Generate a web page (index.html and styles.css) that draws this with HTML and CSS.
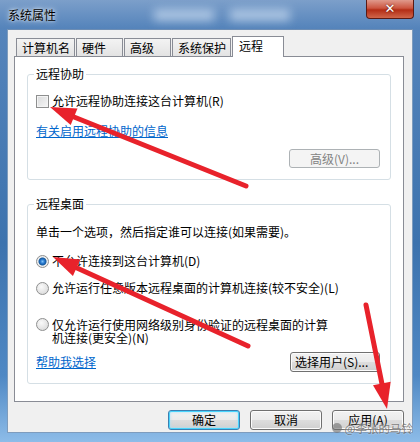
FILE: index.html
```html
<!DOCTYPE html>
<html lang="zh-CN">
<head>
    <meta charset="UTF-8">
    <title>系统属性</title>
    <link rel="stylesheet" href="styles.css">
</head>
<body>
<div class="window">
    <div class="titlebar">
        <span class="title">系统属性</span>
        <span class="blur b1"></span>
        <span class="blur b2"></span>
        <div class="close">✕</div>
    </div>

    <div class="client">
        <div class="tabs">
            <div class="tab">计算机名</div>
            <div class="tab">硬件</div>
            <div class="tab">高级</div>
            <div class="tab">系统保护</div>
            <div class="tab active">远程</div>
        </div>

        <div class="panel">
            <fieldset class="group assist">
                <legend>远程协助</legend>
                <label class="option first"><span class="check"></span>允许远程协助连接这台计算机(R)</label>
                <a class="link info" href="#">有关启用远程协助的信息</a>
                <div class="row right">
                    <button class="btn disabled">高级(V)...</button>
                </div>
            </fieldset>

            <fieldset class="group desktop">
                <legend>远程桌面</legend>
                <div class="intro">单击一个选项，然后指定谁可以连接(如果需要)。</div>
                <label class="option r1"><span class="radio on"></span>不允许连接到这台计算机(D)</label>
                <label class="option r2"><span class="radio"></span>允许运行任意版本远程桌面的计算机连接(较不安全)(L)</label>
                <label class="option r3"><span class="radio"></span><span class="wrap">仅允许运行使用网络级别身份验证的远程桌面的计算<br>机连接(更安全)(N)</span></label>
                <div class="row split">
                    <a class="link" href="#">帮助我选择</a>
                    <button class="btn">选择用户(S)...</button>
                </div>
            </fieldset>
        </div>

        <div class="footer">
            <button class="btn wide default">确定</button>
            <button class="btn wide">取消</button>
            <button class="btn wide">应用(A)</button>
        </div>
    </div>

    <svg class="arrows" width="420" height="442" viewBox="0 0 420 442">
        <g stroke="#e8222b" stroke-width="5" stroke-linecap="round" fill="none">
            <line x1="246" y1="186" x2="74" y2="117"/>
            <line x1="248" y1="346" x2="77" y2="268"/>
            <line x1="366" y1="305" x2="382" y2="384"/>
        </g>
        <g fill="#e8222b">
            <polygon points="50,107 77.5,108.4 70.7,125.1"/>
            <polygon points="53,257 80.4,259.6 72.9,276"/>
            <polygon points="387,409 373,385.3 390.7,381.7"/>
        </g>
    </svg>

    <div class="watermark"><span class="dot"></span>@李张的马铃</div>
</div>
</body>
</html>
```

FILE: styles.css
```css
* {
    box-sizing: border-box;
}
body {
    margin: 0;
    font-family: "Noto Sans CJK SC", "Liberation Sans", sans-serif;
    font-size: 12px;
    color: #000;
}
.window {
    position: relative;
    width: 420px;
    height: 442px;
    overflow: hidden;
    background: linear-gradient(to bottom, #7c9fca 0, #5584bb 28px, #3d73ae 55%, #4f88c4 85%, #8dbce8 100%);
    display: flex;
    flex-direction: column;
}

/* title bar */
.titlebar {
    height: 29px;
    display: flex;
    align-items: center;
    padding: 0 6px 0 8px;
}
.title {
    line-height: 16px;
    color: #000;
    text-shadow: 0 0 6px rgba(255, 255, 255, 0.9), 0 0 3px rgba(255, 255, 255, 0.8);
}
.blur {
    height: 12px;
    width: 60px;
    background: rgba(200, 218, 240, 0.7);
    filter: blur(5px);
}
.b1 {
    margin-left: 98px;
}
.b2 {
    margin-left: 16px;
}
.close {
    margin-left: auto;
    align-self: flex-start;
    width: 48px;
    height: 19px;
    border: 1px solid #5a1a14;
    border-top: none;
    border-radius: 0 0 4px 4px;
    background: linear-gradient(to bottom, #e09a8c 0, #cc5540 45%, #b32d16 55%, #d0664a 100%);
    color: #fff;
    font-family: "DejaVu Sans", sans-serif;
    font-weight: bold;
    font-size: 13px;
    line-height: 18px;
    text-align: center;
    text-shadow: 0 0 2px #4a0e06;
}

/* client area */
.client {
    margin: 0 7px;
    height: 404px;
    border: 1px solid #7e9cbd;
    border-top-color: #6d8db3;
    background: #f0f0f0;
    padding: 6px 8px 0 6px;
}
.tabs {
    display: flex;
    align-items: flex-end;
    gap: 1px;
    height: 20px;
    margin-left: 2px;
}
.tab {
    height: 18px;
    min-width: 47px;
    padding: 1px 4px 0 5px;
    line-height: 16px;
    border: 1px solid #898c95;
    border-bottom: none;
    background: linear-gradient(to bottom, #f3f3f3, #e3e3e3);
}
.tab.active {
    position: relative;
    z-index: 1;
    height: 21px;
    min-width: 52px;
    margin-bottom: -1px;
    padding: 1px 4px 0 6px;
    background: #fff;
}
.panel {
    border: 1px solid #898c95;
    background: #fff;
    padding: 9px 12px 17px 12px;
}

/* group boxes */
.group {
    margin: 0;
    min-width: 0;
    border: 1px solid #d5dfe5;
    border-radius: 3px;
    padding: 0 10px 11px 8px;
}
.group legend {
    padding: 0 2px;
    margin-left: -2px;
    line-height: 16px;
}
.desktop {
    margin-top: 16px;
}
.option {
    display: flex;
    align-items: center;
    line-height: 16px;
}
.option.first {
    margin-top: 11px;
}
.check {
    width: 13px;
    height: 13px;
    margin-right: 3px;
    border: 1px solid #8e8f8f;
    background: linear-gradient(135deg, #d9dadb, #f6f6f6);
    box-shadow: inset 0 0 0 1px #f4f4f4;
}
.radio {
    flex: none;
    width: 13px;
    height: 13px;
    margin-right: 3px;
    border-radius: 50%;
    border: 1px solid #8e8f8f;
    background: radial-gradient(circle at 40% 35%, #fafafa, #d4d4d4);
}
.radio.on {
    background: radial-gradient(circle at 50% 50%, #7ec3f6 0, #2a7ad0 2px, #155a9e 3.5px, #f2f2f2 4.5px, #d8d8d8 100%);
}
.link {
    color: #0066cc;
    text-decoration: underline;
    line-height: 16px;
}
.info {
    display: block;
    width: max-content;
    margin-top: 14px;
}
.row {
    display: flex;
    align-items: center;
}
.row.right {
    justify-content: flex-end;
    margin-top: 10px;
}
.row.split {
    justify-content: space-between;
    margin-top: 8px;
}
.intro {
    margin-top: 12px;
    line-height: 16px;
}
.r1 {
    margin-top: 13px;
}
.r2 {
    margin-top: 11px;
}
.r3 {
    margin-top: 22px;
    align-items: flex-start;
}
.wrap {
    line-height: 13px;
}

/* buttons */
.btn {
    font-family: inherit;
    font-size: 12px;
    color: #000;
    height: 20px;
    padding: 0 4px;
    border: 1px solid #707070;
    border-radius: 3px;
    background: linear-gradient(to bottom, #f2f2f2 0, #ebebeb 48%, #dddddd 52%, #cfcfcf 100%);
    box-shadow: inset 0 0 0 1px #fcfcfc;
    line-height: 16px;
}
.btn.disabled {
    width: 91px;
    height: 19px;
    color: #838383;
    border-color: #adb2b5;
    background: #f4f4f4;
    box-shadow: none;
}
.row.split .btn {
    width: 90px;
    text-align: left;
}
.footer {
    display: flex;
    justify-content: flex-end;
    gap: 10px;
    margin-top: 8px;
}
.btn.wide {
    width: 72px;
}
.btn.default {
    border-color: #3c7fb1;
    box-shadow: inset 0 0 0 1px #48d4fd, inset 0 0 3px 1px #a7e3f8;
}

/* overlays */
.arrows {
    position: absolute;
    left: 0;
    top: 0;
    pointer-events: none;
}
.watermark {
    position: absolute;
    right: 7px;
    bottom: 6px;
    display: flex;
    align-items: center;
    gap: 3px;
    font-size: 11.5px;
    color: rgba(90, 90, 90, 0.75);
    text-shadow: 0 0 2px rgba(255, 255, 255, 0.8);
}
.dot {
    width: 10px;
    height: 10px;
    border-radius: 50%;
    background: rgba(110, 110, 110, 0.6);
}
```
